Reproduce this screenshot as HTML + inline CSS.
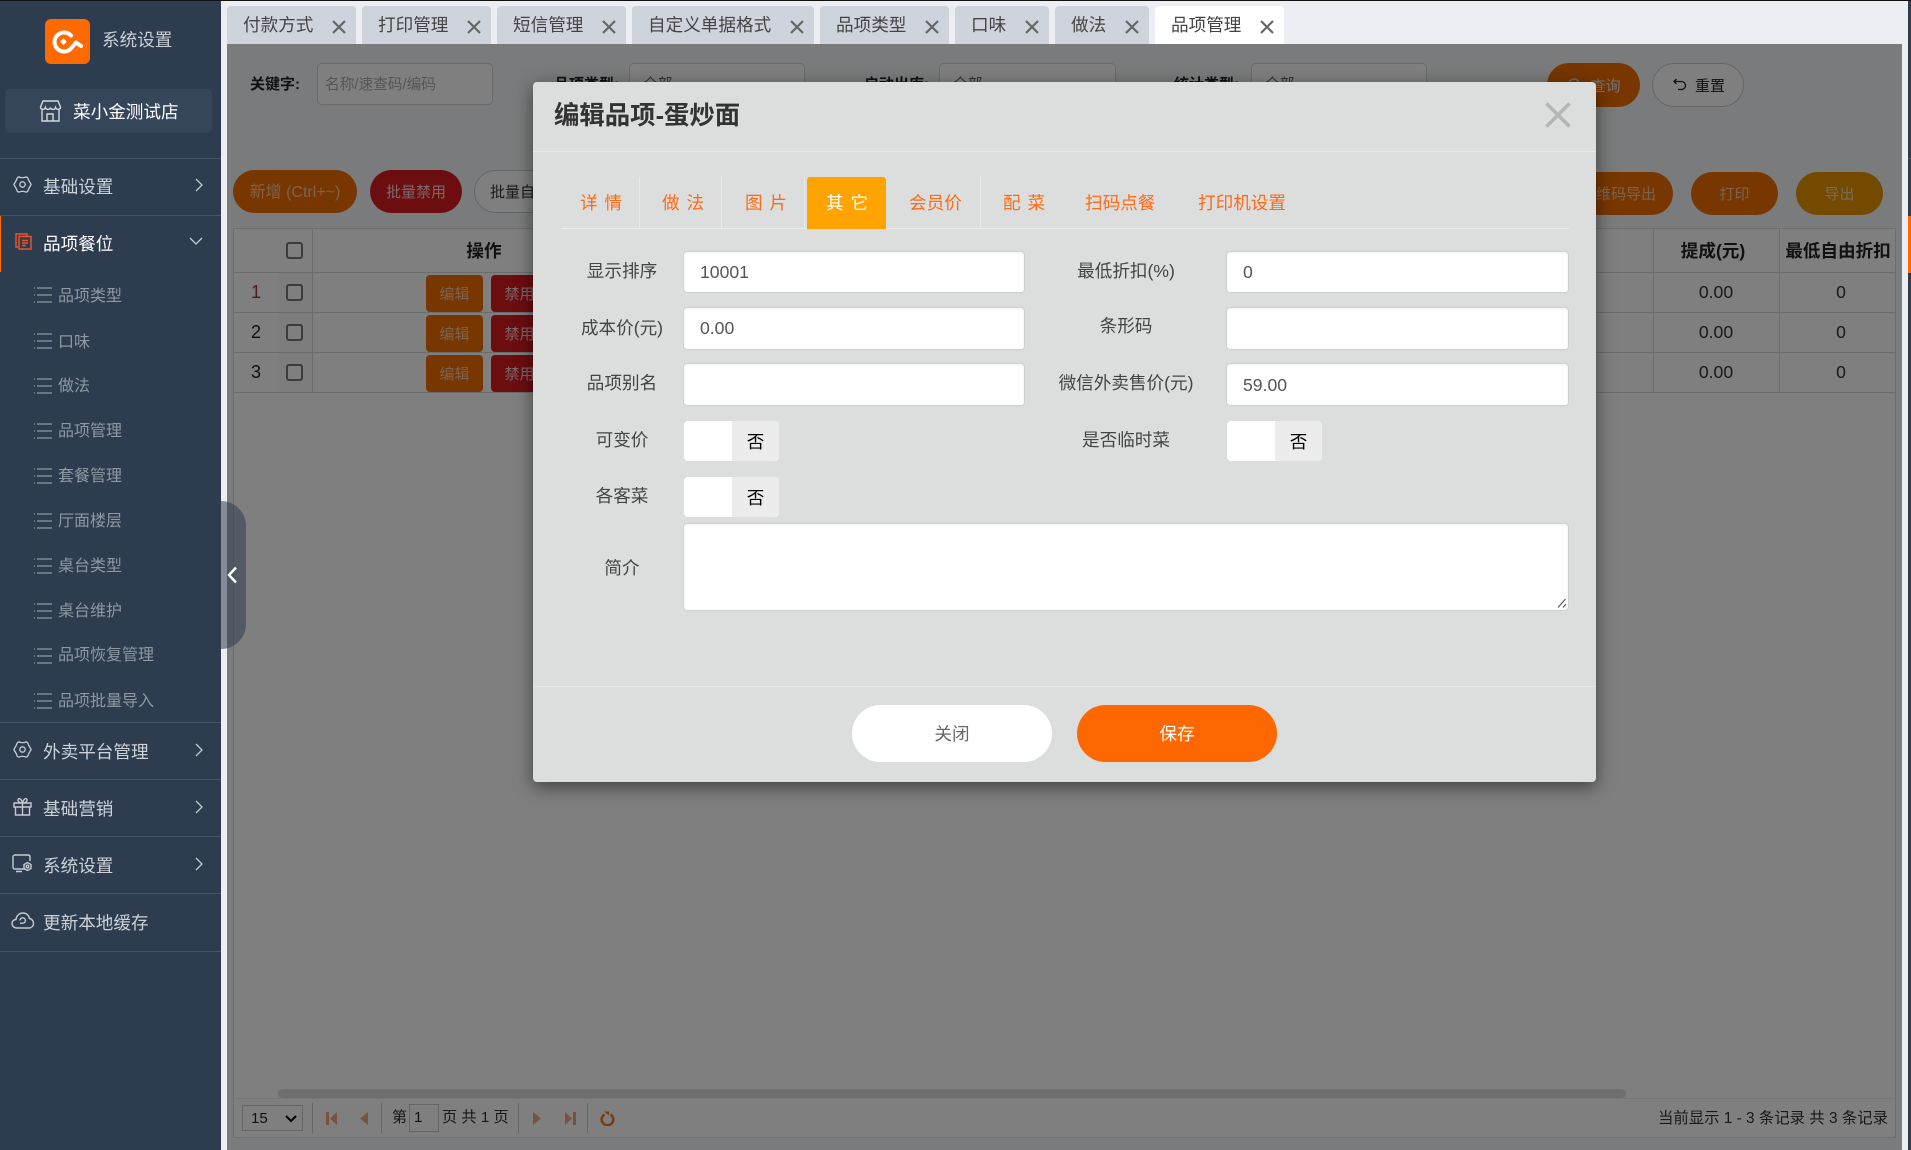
<!DOCTYPE html>
<html lang="zh"><head><meta charset="utf-8"><title>编辑品项</title>
<style>
*{box-sizing:border-box}
html,body{margin:0;padding:0;width:1911px;height:1150px;overflow:hidden;background:#edeef3;font-family:"Liberation Sans","Noto Sans CJK SC",sans-serif}
.a{position:absolute}
.t{position:absolute;white-space:nowrap;line-height:24px;height:24px}
.c{transform:translateX(-50%);text-align:center}
#side{left:0;top:0;width:221px;height:1150px;background:#2d3c4f;overflow:hidden}
.hl{position:absolute;left:0;width:221px;height:1px;background:#465568}
.mi{color:#ccd2d8;font-size:17.6px;left:43px}
.si{color:#8f98a2;font-size:16px;left:58px}
.ic{position:absolute;fill:none;stroke:#c5cbd2;stroke-width:1.4;overflow:visible}
.tab{position:absolute;top:6px;height:38px;background:#cfd3dc;border-radius:4px 4px 0 0;color:#444;font-size:17.6px;line-height:39px;padding-left:16px;white-space:nowrap}
.tab.on{background:#fff}
.tab svg{position:absolute;right:10px;top:14px;width:14px;height:14px;stroke:#666;stroke-width:2.2;fill:none}
.btn{position:absolute;border-radius:22px;text-align:center;font-size:15px;line-height:45px;color:#fff}
.sel{position:absolute;top:63px;height:42px;border:1px solid #d4d4d4;border-radius:5px;background:#fff;font-size:14.7px;color:#666;padding:9px 0 0 13px}
.lb{font-size:15px;font-weight:bold;color:#222}
.cell{position:absolute;background:#d9d9d9}
.rb{position:absolute;width:57px;height:37px;border-radius:4px;color:#fff;font-size:15px;line-height:39px;text-align:center}
.cb{position:absolute;left:286px;width:17px;height:17px;border:2px solid #777;border-radius:3px;background:#fff}
.v{font-size:17.6px;color:#333}
.h{font-size:17.6px;font-weight:bold;color:#222}
#modal{left:533px;top:82px;width:1063px;height:700px;background:#dcdedd;border-radius:4px;box-shadow:0 5px 18px rgba(0,0,0,.5)}
.mt{font-size:17.6px;color:#ff6a17;word-spacing:2px}
.sp{position:absolute;top:177px;width:1px;height:51px;background:#e8eaea}
.lbl{font-size:17.6px;color:#444}
.inp{position:absolute;background:#fff;border:1px solid #d0d0d0;border-radius:4px;box-shadow:inset 0 1px 2px rgba(0,0,0,.06);color:#555;font-size:17.6px;padding-left:16px;line-height:41px}
.sw{position:absolute;height:40px;background:#fff;border-radius:4px;overflow:hidden}
.sw b{position:absolute;right:0;top:0;width:47px;height:40px;background:#ececec;color:#000;font-weight:normal;font-size:17.6px;text-align:center;line-height:42px}
</style></head><body>
<svg width="0" height="0" style="position:absolute"><defs>
<symbol id="x" viewBox="0 0 14 14"><path d="M1 1L13 13M13 1L1 13"/></symbol>
<symbol id="ml" viewBox="0 0 18 16"><path d="M0 1h1M3 1h15M0 8h1M3 8h15M0 15h1M3 15h15" fill="none" stroke="#8f98a2" stroke-width="1.3"/></symbol>
<symbol id="gear" viewBox="0 0 20 20"><path d="M6.5 2C8 3 12 3 13.5 2C14.8 2 15.6 2.8 16 4.2C16.4 6 18.2 8 19 10C18.2 12 16.4 14 16 15.8C15.6 17.2 14.8 18 13.5 18C12 17 8 17 6.5 18C5.2 18 4.4 17.2 4 15.8C3.6 14 1.8 12 1 10C1.8 8 3.6 6 4 4.2C4.4 2.8 5.2 2 6.5 2Z"/><circle cx="10" cy="10" r="2.8"/></symbol>
<symbol id="chev" viewBox="0 0 8 14"><path d="M1 1l6 6-6 6" fill="none" stroke="#c5cbd2" stroke-width="1.3"/></symbol>
</defs></svg>

<div class="a" style="left:0;top:0;width:1911px;height:1px;background:#111;z-index:9"></div>
<div class="a" style="left:1908px;top:1px;width:3px;height:1149px;background:#2d3c4f"></div>
<div class="a" style="left:1908px;top:158px;width:3px;height:1px;background:#465568"></div>
<div class="a" style="left:1908px;top:216px;width:3px;height:57px;background:#ff6a00"></div>

<!-- sidebar -->
<div id="side" class="a">
<div class="a" style="left:45px;top:19px;width:45px;height:45px;background:#ff6a00;border-radius:6px"><svg width="45" height="45" viewBox="0 0 45 45" fill="none" stroke="#fff" stroke-width="4" stroke-linecap="round" stroke-linejoin="round"><path d="M26 16.5A9.5 9.5 0 1 0 26 29.5L31 23.5L36 27"/><path d="M18.5 20l2.7 2.700-2.700 2.700-2.700-2.700z" fill="#fff" stroke-width="1"/></svg></div>
<div class="t" style="left:102px;top:28px;font-size:17.6px;color:#c8ced5">系统设置</div>
<div class="a" style="left:5px;top:89px;width:207px;height:44px;background:#35455a;border-radius:5px"></div>
<svg class="ic" style="left:40px;top:100px;stroke:#d5d9de" width="21" height="22" viewBox="0 0 21 22"><path d="M3 1h15l2.500 6c0 3-4 3-5 .5-.5 2.500-4.500 2.500-5 0-.5 2.500-4.500 2.500-5 0C4.500 10 .5 10 .5 7z"/><path d="M2 10v11h17V10M7 21v-7h6v7"/></svg>
<div class="t" style="left:73px;top:100px;font-size:17.6px;color:#fff">菜小金测试店</div>
<div class="hl" style="top:158px"></div>
<svg class="ic" style="left:13px;top:175px" width="19" height="19"><use href="#gear"/></svg>
<div class="t mi" style="top:175px">基础设置</div>
<svg class="a" style="left:195px;top:178px" width="8" height="14"><use href="#chev"/></svg>
<div class="hl" style="top:215px"></div>
<div class="a" style="left:0;top:216px;width:1px;height:56px;background:#ff6a00"></div>
<svg class="ic" style="left:15px;top:233px;stroke:#e8552d;stroke-width:1.5" width="17" height="17" viewBox="0 0 17 17"><path d="M3 14H1V1h11v2"/><path d="M4 3.5h12V16H4zM7 7.5h6M7 10h6M7 12.5h4"/></svg>
<div class="t mi" style="top:232px;color:#fff">品项餐位</div>
<svg class="a" style="left:189px;top:237px" width="14" height="8" viewBox="0 0 14 8"><path d="M1 1l6 6 6-6" fill="none" stroke="#c5cbd2" stroke-width="1.3"/></svg>

<svg class="a" style="left:34px;top:287px" width="18" height="16"><use href="#ml"/></svg><div class="t si" style="top:285px">品项类型</div>
<svg class="a" style="left:34px;top:333px" width="18" height="16"><use href="#ml"/></svg><div class="t si" style="top:331px">口味</div>
<svg class="a" style="left:34px;top:378px" width="18" height="16"><use href="#ml"/></svg><div class="t si" style="top:375px">做法</div>
<svg class="a" style="left:34px;top:423px" width="18" height="16"><use href="#ml"/></svg><div class="t si" style="top:420px">品项管理</div>
<svg class="a" style="left:34px;top:468px" width="18" height="16"><use href="#ml"/></svg><div class="t si" style="top:465px">套餐管理</div>
<svg class="a" style="left:34px;top:513px" width="18" height="16"><use href="#ml"/></svg><div class="t si" style="top:510px">厅面楼层</div>
<svg class="a" style="left:34px;top:558px" width="18" height="16"><use href="#ml"/></svg><div class="t si" style="top:555px">桌台类型</div>
<svg class="a" style="left:34px;top:603px" width="18" height="16"><use href="#ml"/></svg><div class="t si" style="top:600px">桌台维护</div>
<svg class="a" style="left:34px;top:648px" width="18" height="16"><use href="#ml"/></svg><div class="t si" style="top:644px">品项恢复管理</div>
<svg class="a" style="left:34px;top:693px" width="18" height="16"><use href="#ml"/></svg><div class="t si" style="top:690px">品项批量导入</div>

<div class="hl" style="top:722px"></div>
<svg class="ic" style="left:13px;top:740px" width="19" height="19"><use href="#gear"/></svg>
<div class="t mi" style="top:740px">外卖平台管理</div>
<svg class="a" style="left:195px;top:743px" width="8" height="14"><use href="#chev"/></svg>
<div class="hl" style="top:779px"></div>
<svg class="ic" style="left:13px;top:797px" width="19" height="19" viewBox="0 0 19 19"><path d="M1 6h17v4H1zM2.500 10v8h14v-8M9.500 6v12M9.500 6C7 6 5 5 5 3s3-2.500 4.500 3C11 .5 14 1 14 3s-2 3-4.500 3"/></svg>
<div class="t mi" style="top:797px">基础营销</div>
<svg class="a" style="left:195px;top:800px" width="8" height="14"><use href="#chev"/></svg>
<div class="hl" style="top:836px"></div>
<svg class="ic" style="left:12px;top:854px" width="21" height="19" viewBox="0 0 21 19"><path d="M13 15H3c-1.200 0-2-.8-2-2V3c0-1.200.8-2 2-2h13c1.200 0 2 .8 2 2v4M4 17.500h6"/><path d="M15.500 8.500l3.500 2v4l-3.500 2-3.500-2v-4z"/><circle cx="15.500" cy="12.500" r="1.300"/></svg>
<div class="t mi" style="top:854px">系统设置</div>
<svg class="a" style="left:195px;top:857px" width="8" height="14"><use href="#chev"/></svg>
<div class="hl" style="top:893px"></div>
<svg class="ic" style="left:11px;top:912px" width="23" height="17" viewBox="0 0 23 17"><path d="M6 16C3 16 1 14 1 11.500 1 9 3 7.500 5 7.500 5.500 3.500 8.500 1 12 1c3.500 0 6 2.500 6.500 5.500 2.500.3 4 2.500 4 5 0 2.500-2 4.500-4.500 4.500z"/><path d="M9 8.500a2.700 2.700 0 1 1 2.700 2.700H9"/></svg>
<div class="t mi" style="top:911px">更新本地缓存</div>
<div class="hl" style="top:951px"></div>
</div>

<!-- top tabs -->
<div class="tab" style="left:227px;width:129px">付款方式<svg><use href="#x"/></svg></div>
<div class="tab" style="left:362px;width:129px">打印管理<svg><use href="#x"/></svg></div>
<div class="tab" style="left:497px;width:129px">短信管理<svg><use href="#x"/></svg></div>
<div class="tab" style="left:632px;width:182px">自定义单据格式<svg><use href="#x"/></svg></div>
<div class="tab" style="left:820px;width:129px">品项类型<svg><use href="#x"/></svg></div>
<div class="tab" style="left:955px;width:94px">口味<svg><use href="#x"/></svg></div>
<div class="tab" style="left:1055px;width:94px">做法<svg><use href="#x"/></svg></div>
<div class="tab on" style="left:1155px;width:129px">品项管理<svg><use href="#x"/></svg></div>

<!-- page under overlay -->
<div class="a" style="left:227px;top:44px;width:1675px;height:1106px;background:#f5f6f9"></div>
<div class="a" style="left:233px;top:228px;width:1663px;height:910px;background:#fff;border:1px solid #ddd"></div>

<div class="t lb" style="left:250px;top:73px">关键字:</div>
<div class="sel" style="left:317px;width:176px;color:#aaa;padding-left:7px">名称/速查码/编码</div>
<div class="t lb" style="left:554px;top:73px">品项类型:</div>
<div class="sel" style="left:629px;width:176px">全部</div>
<div class="t lb" style="left:864px;top:73px">启动出库:</div>
<div class="sel" style="left:939px;width:177px">全部</div>
<div class="t lb" style="left:1174px;top:73px">统计类型:</div>
<div class="sel" style="left:1251px;width:176px">全部</div>

<div class="btn" style="left:1547px;top:63px;width:93px;height:44px;background:#f06c00;padding-left:24px;line-height:48px;color:#e8e8e8">查询</div>
<svg class="a" style="left:1567px;top:77px" width="16" height="16" fill="none" stroke="#ddd" stroke-width="1.5"><circle cx="7" cy="7" r="5"/><path d="M11 11l4 4"/></svg>
<div class="btn" style="left:1652px;top:63px;width:92px;height:44px;background:#fff;border:1px solid #ccc;color:#222;padding-left:24px;line-height:46px">重置</div>
<svg class="a" style="left:1673px;top:77px" width="14" height="14" fill="none" stroke="#222" stroke-width="1.3"><path d="M1 4.500h7.500a4 4 0 0 1 0 8H5M3.500 2L1 4.500 3.500 7"/></svg>

<div class="btn" style="left:233px;top:170px;width:124px;height:43px;background:#f06c00;color:#f3c9a0;font-size:16px">新增 (Ctrl+~)</div>
<div class="btn" style="left:370px;top:170px;width:92px;height:43px;background:#d81a20;color:#f7cfd2">批量禁用</div>
<div class="btn" style="left:474px;top:170px;width:92px;height:43px;background:#fff;border:1px solid #ccc;color:#333;line-height:43px">批量自动</div>
<div class="btn" style="left:1564px;top:172px;width:109px;height:43px;background:#f06c00;color:#f3c9a0">二维码导出</div>
<div class="btn" style="left:1691px;top:172px;width:87px;height:43px;background:#f06c00;color:#f3c9a0">打印</div>
<div class="btn" style="left:1796px;top:172px;width:87px;height:43px;background:#e89400;color:#f6d7a0">导出</div>

<!-- table -->
<div class="cell" style="left:233px;top:272px;width:1662px;height:1px"></div>
<div class="cell" style="left:233px;top:312px;width:1662px;height:1px"></div>
<div class="cell" style="left:233px;top:352px;width:1662px;height:1px"></div>
<div class="cell" style="left:233px;top:392px;width:1662px;height:1px"></div>
<div class="cell" style="left:312px;top:228px;width:1px;height:165px"></div>
<div class="cell" style="left:1653px;top:228px;width:1px;height:165px"></div>
<div class="cell" style="left:1779px;top:228px;width:1px;height:165px"></div>
<div class="a" style="left:278px;top:273px;width:34px;height:39px;background:#fafafa"></div>
<div class="a" style="left:278px;top:313px;width:34px;height:39px;background:#fafafa"></div>
<div class="a" style="left:278px;top:353px;width:34px;height:39px;background:#fafafa"></div>

<div class="cb" style="top:242px"></div><div class="cb" style="top:284px"></div><div class="cb" style="top:324px"></div><div class="cb" style="top:364px"></div>
<div class="t h c" style="left:484px;top:239px">操作</div>
<div class="t h c" style="left:1713px;top:239px">提成(元)</div>
<div class="t h c" style="left:1838px;top:239px">最低自由折扣</div>
<div class="t c" style="left:256px;top:280px;font-size:18px;color:#a33">1</div>
<div class="t c" style="left:256px;top:320px;font-size:18px;color:#222">2</div>
<div class="t c" style="left:256px;top:360px;font-size:18px;color:#222">3</div>
<div class="rb" style="left:426px;top:275px;background:#f06c00;color:#f3c9a0">编辑</div>
<div class="rb" style="left:426px;top:315px;background:#f06c00;color:#f3c9a0">编辑</div>
<div class="rb" style="left:426px;top:355px;background:#f06c00;color:#f3c9a0">编辑</div>
<div class="rb" style="left:491px;top:275px;background:#d81a20;color:#f7cfd2">禁用</div>
<div class="rb" style="left:491px;top:315px;background:#d81a20;color:#f7cfd2">禁用</div>
<div class="rb" style="left:491px;top:355px;background:#d81a20;color:#f7cfd2">禁用</div>
<div class="t v c" style="left:1716px;top:280px">0.00</div><div class="t v c" style="left:1841px;top:280px">0</div>
<div class="t v c" style="left:1716px;top:320px">0.00</div><div class="t v c" style="left:1841px;top:320px">0</div>
<div class="t v c" style="left:1716px;top:360px">0.00</div><div class="t v c" style="left:1841px;top:360px">0</div>

<!-- footer pager -->
<div class="a" style="left:278px;top:1089px;width:1348px;height:9px;background:#dcdcdc;border-radius:5px"></div>
<div class="a" style="left:234px;top:1098px;width:1661px;height:1px;background:#eee"></div>
<div class="a" style="left:242px;top:1105px;width:61px;height:26px;border:1px solid #ccc;font-size:15px;color:#222;padding-left:8px;line-height:26px">15</div>
<svg class="a" style="left:285px;top:1115px" width="12" height="8" fill="none" stroke="#000" stroke-width="2"><path d="M1 1l5 5 5-5"/></svg>
<div class="a" style="left:312px;top:1103px;width:1px;height:30px;background:#ccc"></div>
<div class="a" style="left:381px;top:1103px;width:1px;height:30px;background:#ccc"></div>
<div class="a" style="left:518px;top:1103px;width:1px;height:30px;background:#ccc"></div>
<div class="a" style="left:587px;top:1103px;width:1px;height:30px;background:#ccc"></div>
<svg class="a" style="left:326px;top:1112px" width="11" height="13" fill="#f0a878"><path d="M0 0h3v13H0zM11 0v13L4 6.500z"/></svg>
<svg class="a" style="left:360px;top:1112px" width="8" height="13" fill="#f0a878"><path d="M8 0v13L0 6.500z"/></svg>
<div class="t" style="left:392px;top:1106px;font-size:15px;color:#333">第</div>
<div class="a" style="left:409px;top:1104px;width:30px;height:28px;border:1px solid #ccc;font-size:15px;color:#222;line-height:26px;padding-left:4px">1</div>
<div class="t" style="left:442px;top:1106px;font-size:15.2px;color:#333">页 共 1 页</div>
<svg class="a" style="left:533px;top:1112px" width="9" height="13" fill="#f0a878"><path d="M0 0v13l8-6.500z"/></svg>
<svg class="a" style="left:565px;top:1112px" width="11" height="13" fill="#f0a878"><path d="M0 0v13l7-6.500zM8 0h3v13H8z"/></svg>
<svg class="a" style="left:600px;top:1110px" width="15" height="16" fill="none" stroke="#f47a20" stroke-width="2.500"><path d="M4.500 4.500a5.800 5.800 0 1 0 6 0"/><path d="M4 1.500h5v4z" fill="#f47a20" stroke="none"/></svg>
<div class="t" style="right:23px;top:1107px;font-size:15.4px;color:#333">当前显示 1 - 3 条记录 共 3 条记录</div>

<!-- overlay -->
<div class="a" style="left:227px;top:44px;width:1675px;height:1106px;background:rgba(0,0,0,.5)"></div>

<!-- collapse handle -->
<div class="a" style="left:221px;top:501px;width:25px;height:148px;background:rgba(45,61,80,.55);border-radius:0 25px 25px 0"></div>
<svg class="a" style="left:227px;top:566px" width="11" height="18" fill="none" stroke="#fff" stroke-width="2.400"><path d="M9 1.500L2 9l7 7.500"/></svg>

<!-- modal -->
<div id="modal" class="a"></div>
<div class="t" style="left:554px;top:100px;height:30px;line-height:32px;font-size:25.4px;font-weight:bold;color:#333">编辑品项-蛋炒面</div>
<svg class="a" style="left:1545px;top:102px" width="26" height="26" fill="none" stroke="#b5b5b5" stroke-width="3.500"><path d="M1.500 1.500l23 23M24.500 1.500l-23 23"/></svg>
<div class="a" style="left:533px;top:151px;width:1063px;height:1px;background:#e6e8e8"></div>
<div class="a" style="left:561px;top:228px;width:1008px;height:1px;background:#eceeee"></div>
<div class="sp" style="left:639px"></div><div class="sp" style="left:721px"></div><div class="sp" style="left:804px"></div><div class="sp" style="left:980px"></div>
<div class="a" style="left:807px;top:177px;width:79px;height:52px;background:#ffa300;border-radius:3px 3px 0 0"></div>
<div class="t mt" style="left:580px;top:191px">详 情</div>
<div class="t mt" style="left:662px;top:191px">做 法</div>
<div class="t mt" style="left:745px;top:191px">图 片</div>
<div class="t mt" style="left:826px;top:191px;color:#fff">其 它</div>
<div class="t mt" style="left:909px;top:191px">会员价</div>
<div class="t mt" style="left:1003px;top:191px">配 菜</div>
<div class="t mt" style="left:1085px;top:191px">扫码点餐</div>
<div class="t mt" style="left:1198px;top:191px">打印机设置</div>

<div class="t lbl c" style="left:622px;top:259px">显示排序</div>
<div class="t lbl c" style="left:622px;top:316px">成本价(元)</div>
<div class="t lbl c" style="left:622px;top:371px">品项别名</div>
<div class="t lbl c" style="left:622px;top:428px">可变价</div>
<div class="t lbl c" style="left:622px;top:484px">各客菜</div>
<div class="t lbl c" style="left:622px;top:556px">简介</div>
<div class="t lbl c" style="left:1126px;top:259px">最低折扣(%)</div>
<div class="t lbl c" style="left:1126px;top:314px">条形码</div>
<div class="t lbl c" style="left:1126px;top:371px">微信外卖售价(元)</div>
<div class="t lbl c" style="left:1126px;top:428px">是否临时菜</div>

<div class="inp" style="left:683px;top:251px;width:342px;height:42px">10001</div>
<div class="inp" style="left:683px;top:307px;width:342px;height:43px">0.00</div>
<div class="inp" style="left:683px;top:363px;width:342px;height:43px"></div>
<div class="inp" style="left:1226px;top:251px;width:343px;height:42px">0</div>
<div class="inp" style="left:1226px;top:307px;width:343px;height:43px"></div>
<div class="inp" style="left:1226px;top:363px;width:343px;height:43px;line-height:43px">59.00</div>
<div class="sw" style="left:684px;top:421px;width:95px"><b>否</b></div>
<div class="sw" style="left:684px;top:477px;width:95px"><b>否</b></div>
<div class="sw" style="left:1227px;top:421px;width:95px"><b>否</b></div>
<div class="inp" style="left:683px;top:523px;width:886px;height:88px"></div>
<svg class="a" style="left:1557px;top:598px" width="10" height="11" fill="none" stroke="#555" stroke-width="1.100"><path d="M1 9.500L8.500 1M6 9.500l3-3.500"/></svg>

<div class="a" style="left:533px;top:686px;width:1063px;height:1px;background:#e5e6e6"></div>
<div class="a" style="left:852px;top:705px;width:200px;height:57px;background:#fff;border-radius:29px;color:#666;font-size:17.6px;line-height:59px;text-align:center">关闭</div>
<div class="a" style="left:1077px;top:705px;width:200px;height:57px;background:#ff6700;border-radius:29px;color:#fff;font-size:17.6px;line-height:59px;text-align:center">保存</div>
</body></html>
